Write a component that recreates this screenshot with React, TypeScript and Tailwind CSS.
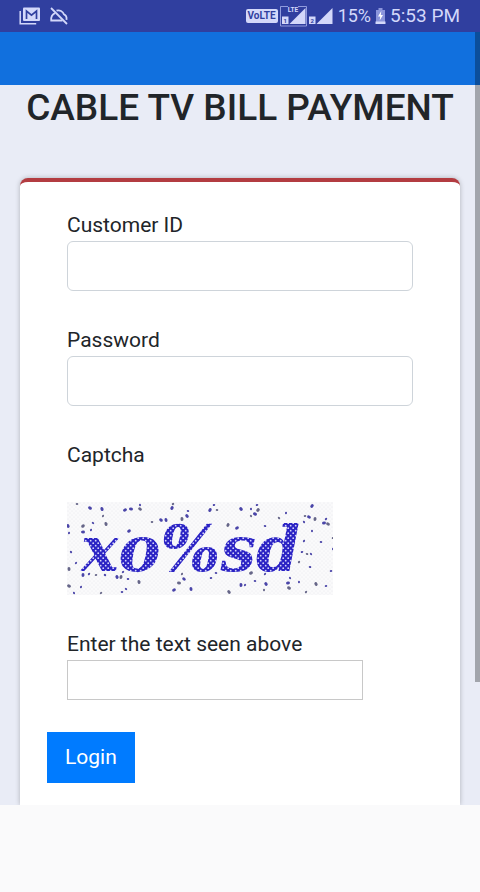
import type { ReactNode } from 'react';

// x, y, radius of the noise dots in the captcha
const specks: [number, number, number][] = [
  [10, 2, 1], [23, 6, 2], [35, 7, 2], [36, 14, 1], [58, 8, 2], [64, 7, 2], [73, 7, 2], [73, 3, 1],
  [105, 6, 2], [106, 2, 1], [121, 9, 1], [120, 14, 2], [115, 17, 2], [143, 8, 2], [147, 3, 1], [150, 8, 1],
  [174, 7, 2], [184, 7, 1], [191, 8, 2], [190, 3, 1], [188, 12, 2], [184, 14, 1], [219, 11, 1],
  [245, 4, 2], [238, 14, 1], [242, 15, 2], [237, 20, 1], [248, 17, 2], [259, 17, 1], [257, 21, 2], [261, 22, 2],
  [1, 24, 2], [2, 31, 1], [16, 24, 2], [16, 30, 2], [26, 21, 1], [39, 22, 2], [24, 28, 1], [62, 29, 2],
  [85, 20, 1], [94, 18, 2], [99, 18, 2], [161, 23, 2], [170, 26, 2], [198, 24, 1], [212, 16, 1],
  [245, 29, 1], [237, 39, 1], [266, 36, 1], [254, 40, 1], [4, 50, 1], [2, 67, 2], [9, 61, 1], [235, 50, 1],
  [240, 52, 1], [244, 52, 1], [266, 47, 1], [232, 60, 1], [264, 69, 1], [243, 65, 1], [249, 82, 2],
  [16, 73, 2], [22, 72, 1], [29, 73, 1], [38, 73, 1], [50, 75, 2], [54, 75, 2], [56, 70, 1], [61, 77, 1],
  [2, 84, 2], [7, 91, 1], [14, 85, 1], [34, 91, 1], [55, 90, 1], [59, 87, 1], [72, 80, 2], [71, 69, 1],
  [107, 88, 2], [112, 81, 2], [117, 77, 2], [124, 87, 2], [115, 72, 1], [144, 76, 1], [149, 71, 1],
  [162, 90, 2], [174, 83, 2], [178, 83, 1], [184, 71, 2], [188, 79, 1], [199, 82, 2], [197, 88, 1],
  [198, 72, 1], [221, 81, 2], [222, 86, 2], [223, 76, 1], [232, 80, 1], [239, 90, 1], [259, 84, 1],
];

const inputBase = 'block w-full bg-white px-3 text-[21px] text-[#212529] outline-none focus:border-[#80bdff]';

function Field({ id, label, children }: { id: string; label: string; children: ReactNode }) {
  return (
    <div className="px-5">
      <label htmlFor={id} className="mb-px block text-[21px] leading-[30px]">
        {label}
      </label>
      {children}
    </div>
  );
}

function GmailStackIcon() {
  return (
    <svg width="22" height="18" viewBox="0 0 22 18" aria-hidden="true">
      <path d="M1.2 4v12.8h16" fill="none" stroke="#d3d8fa" strokeWidth="1.5" />
      <rect x="4" y="0.5" width="17" height="13.5" rx="1" fill="#d3d8fa" />
      <path d="M7.5 12V4l5 4.2 5-4.2v8" fill="none" stroke="#303f9f" strokeWidth="1.7" />
    </svg>
  );
}

function CloudOffIcon() {
  return (
    <svg width="20" height="18" viewBox="0 0 20 18" fill="none" stroke="#d3d8fa" strokeWidth="1.8" aria-hidden="true">
      <path d="M13.5 13.5H2.2c-.4-3.6 1.4-6.2 3.8-7.4" />
      <path d="M7.5 3.7A5.8 5.8 0 0 1 15 7.4c2 .8 2.8 2.8 2.5 5.4" />
      <path d="M2 1l16 16" />
    </svg>
  );
}

function SignalIcon({ sim, lte }: { sim: string; lte?: boolean }) {
  return (
    <svg width="27" height="22" viewBox="0 0 27 22" fontFamily="Roboto, sans-serif" fontWeight="700" aria-hidden="true">
      {lte && (
        <>
          <path d="M8 1.5H.5v19.5h26V1.5H18" fill="none" stroke="#aab2ee" strokeWidth="0.8" />
          <text x="13" y="6.5" fontSize="6.5" textAnchor="middle" fill="#d3d8fa">LTE</text>
        </>
      )}
      <rect x="2" y="11.5" width="6.5" height="7.5" fill="#d3d8fa" />
      <text x="5.2" y="17.5" fontSize="6" textAnchor="middle" fill="#303f9f">{sim}</text>
      <path d="M25.5 3v16h-16z" fill="#d3d8fa" />
    </svg>
  );
}

function BatteryIcon() {
  return (
    <svg width="11" height="18" viewBox="0 0 11 18" aria-hidden="true">
      <path d="M3.5 1h4v2h2.5v12H1V3h2.5z" fill="#8b95dc" />
      <path d="M0.5 14.5h10V17H.5z" fill="#d3d8fa" />
      <path d="M6.3 4L3 9.5h2.2L4.7 13.5 8 8H5.8z" fill="#fff" />
    </svg>
  );
}

function StatusBar() {
  return (
    <div className="flex h-8 items-center justify-between bg-[#303f9f] pr-5 pl-[19px] text-[#d3d8fa]">
      <div className="flex items-center gap-2">
        <GmailStackIcon />
        <CloudOffIcon />
      </div>
      <div className="flex items-center">
        <span className="rounded-xs bg-[#d3d8fa] px-0.5 text-[10px] leading-[14px] font-bold text-[#303f9f]">VoLTE</span>
        <span className="ml-0.5 flex">
          <SignalIcon sim="1" lte />
          <SignalIcon sim="2" />
        </span>
        <span className="ml-1 text-lg">15%</span>
        <span className="mx-1">
          <BatteryIcon />
        </span>
        <span className="text-[19px]">5:53 PM</span>
      </div>
    </div>
  );
}

function Captcha() {
  return (
    <svg width="266" height="93" viewBox="0 0 266 93" role="img" aria-label="Captcha">
      <defs>
        <pattern id="ink" width="5" height="5" patternUnits="userSpaceOnUse">
          <rect width="5" height="5" fill="#2a22c4" />
          <circle cx="1.2" cy="1.2" r="0.9" fill="#d6d5fa" />
          <circle cx="3.7" cy="3.7" r="0.9" fill="#d6d5fa" />
        </pattern>
        <pattern id="paper" width="4" height="4" patternUnits="userSpaceOnUse">
          <rect width="4" height="4" fill="#fafafb" />
          <circle cx="1" cy="1" r="0.5" fill="#e6e6ea" />
          <circle cx="3" cy="3" r="0.5" fill="#e6e6ea" />
        </pattern>
      </defs>
      <rect width="266" height="93" fill="url(#paper)" />
      {specks.map(([x, y, r], i) => (
        <ellipse key={i} cx={x} cy={y} rx={r * 0.7 + 0.6} ry={r * 0.5 + 0.5} fill={i % 3 ? '#4a45a8' : '#666688'} transform={`rotate(${i * 37} ${x} ${y})`} />
      ))}
      <text x="14" y="69" fontSize="63" fontWeight="700" fontStyle="italic" fontFamily="'DejaVu Serif', serif" fill="url(#ink)">
        xo%sd
      </text>
    </svg>
  );
}

export default function App() {
  return (
    <div className="relative flex min-h-screen flex-col bg-[#fafafb] font-[Roboto,sans-serif] text-[#212529]">
      <StatusBar />
      <header className="h-[53px] bg-[#1170de]" />

      <main className="overflow-hidden bg-[#e9ecf6] px-5">
        <h1 className="text-center text-[37px] leading-[46px] font-medium whitespace-nowrap">CABLE TV BILL PAYMENT</h1>

        <form
          className="mt-[47px] flex flex-col gap-[34px] rounded-t-lg border-t-4 border-[#b33c41] bg-white px-[27px] pt-7 pb-[22px] shadow-[0_0_5px_rgba(0,0,0,0.25)]"
          onSubmit={(e) => e.preventDefault()}
        >
          <Field id="customer" label="Customer ID">
            <input id="customer" type="text" className={`${inputBase} h-[50px] rounded-md border border-[#ced4da]`} />
          </Field>
          <Field id="password" label="Password">
            <input id="password" type="password" className={`${inputBase} h-[50px] rounded-md border border-[#ced4da]`} />
          </Field>
          <div className="flex flex-col gap-8 px-5">
            <p className="text-[21px] leading-[30px]">Captcha</p>
            <Captcha />
          </div>
          <div className="flex flex-col gap-8">
            <Field id="captcha" label="Enter the text seen above">
              <input id="captcha" type="text" className={`${inputBase} h-10 max-w-[296px] border border-[#c8c8c8]`} />
            </Field>
            <button type="submit" className="h-[51px] self-start bg-[#007bff] px-[18px] text-[21px] text-white">
              Login
            </button>
          </div>
        </form>
      </main>

      {/* Scroll thumb */}
      <div className="absolute top-8 right-0 h-[650px] w-[5px] bg-black/30" />
    </div>
  );
}
